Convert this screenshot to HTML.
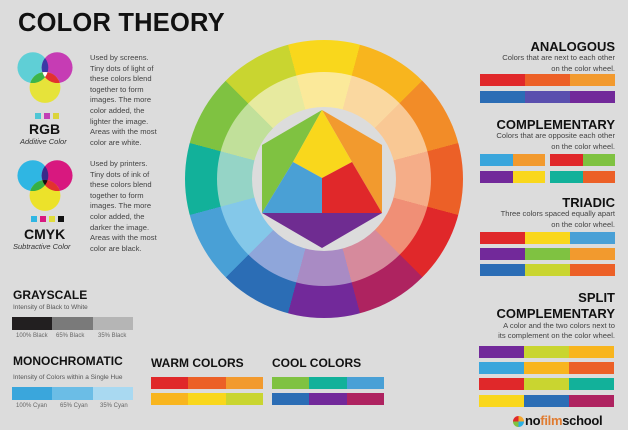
<!DOCTYPE html>
<html><head><meta charset="utf-8"><style>
*{margin:0;padding:0;box-sizing:border-box}
body{width:628px;height:430px;background:#dcdcdc;position:relative;overflow:hidden;font-family:"Liberation Sans",sans-serif;color:#111}
.a{position:absolute}
.t{font-weight:bold;color:#111;white-space:nowrap}
.p{font-size:7.6px;line-height:10.6px;color:#444;white-space:nowrap}
.bar{position:absolute;display:flex;height:12px}
.bar div{flex:1}
.r{text-align:right}
</style></head><body>
<div class="a t" style="left:18px;top:9px;font-size:25.5px;letter-spacing:0.2px">COLOR THEORY</div>

<!-- RGB venn -->
<svg class="a" style="left:15px;top:50px" width="60" height="54" viewBox="4 4 54 49">
<circle cx="20" cy="20" r="14" fill="#5fcfd6"/>
<circle cx="42" cy="20" r="14" fill="#c63cb4"/>
<circle cx="31" cy="38" r="14" fill="#e6e33a"/>
<path d="M31 11.34A14 14 0 0 1 31 28.66A14 14 0 0 1 31 11.34Z" fill="#3b3aa6"/>
<path d="M33.35 24.21A14 14 0 0 0 17.65 33.79A14 14 0 0 0 33.35 24.21Z" fill="#3cb54a"/>
<path d="M28.65 24.21A14 14 0 0 1 44.35 33.79A14 14 0 0 1 28.65 24.21Z" fill="#e2322e"/>
<path d="M28.65 24.21A14 14 0 0 1 33.35 24.21A14 14 0 0 1 31 28.66A14 14 0 0 1 28.65 24.21Z" fill="#fff"/>
</svg>
<div class="a" style="left:35px;top:113px;width:6px;height:6px;background:#4fc6d5"></div>
<div class="a" style="left:44px;top:113px;width:6px;height:6px;background:#c23fb5"></div>
<div class="a" style="left:53px;top:113px;width:6px;height:6px;background:#dbd43a"></div>
<div class="a t" style="left:29px;top:121px;font-size:14px">RGB</div>
<div class="a" style="left:20px;top:137px;font-size:7.5px;font-style:italic;color:#333">Additive Color</div>
<div class="a p" style="left:90px;top:53px">Used by screens.<br>Tiny dots of light of<br>these colors blend<br>together to form<br>images. The more<br>color added, the<br>lighter the image.<br>Areas with the most<br>color are white.</div>

<!-- CMYK venn -->
<svg class="a" style="left:15px;top:158px" width="60" height="54" viewBox="4 4 54 49">
<circle cx="20" cy="20" r="14" fill="#2fb6e3"/>
<circle cx="42" cy="20" r="14" fill="#d8187f"/>
<circle cx="31" cy="38" r="14" fill="#ece22a"/>
<path d="M31 11.34A14 14 0 0 1 31 28.66A14 14 0 0 1 31 11.34Z" fill="#3a2a8a"/>
<path d="M33.35 24.21A14 14 0 0 0 17.65 33.79A14 14 0 0 0 33.35 24.21Z" fill="#35b045"/>
<path d="M28.65 24.21A14 14 0 0 1 44.35 33.79A14 14 0 0 1 28.65 24.21Z" fill="#e2322e"/>
<path d="M28.65 24.21A14 14 0 0 1 33.35 24.21A14 14 0 0 1 31 28.66A14 14 0 0 1 28.65 24.21Z" fill="#111"/>
</svg>
<div class="a" style="left:31px;top:216px;width:6px;height:6px;background:#2fb6e3"></div>
<div class="a" style="left:40px;top:216px;width:6px;height:6px;background:#d8187f"></div>
<div class="a" style="left:49px;top:216px;width:6px;height:6px;background:#e0dc3a"></div>
<div class="a" style="left:58px;top:216px;width:6px;height:6px;background:#111"></div>
<div class="a t" style="left:24px;top:226px;font-size:14px">CMYK</div>
<div class="a" style="left:13px;top:242px;font-size:7.5px;font-style:italic;color:#333">Subtractive Color</div>
<div class="a p" style="left:90px;top:159px">Used by printers.<br>Tiny dots of ink of<br>these colors blend<br>together to form<br>images. The more<br>color added, the<br>darker the image.<br>Areas with the most<br>color are black.</div>

<!-- wheel -->
<div class="a" style="left:185px;top:40px;width:278px;height:278px;border-radius:50%;background:conic-gradient(from -15deg,#f9d71c 0 30deg,#f8b51e 30deg 60deg,#f28c28 60deg 90deg,#ec6027 90deg 120deg,#e0282a 120deg 150deg,#ae2360 150deg 180deg,#72299a 180deg 210deg,#2b6db5 210deg 240deg,#49a0d6 240deg 270deg,#12b19a 270deg 300deg,#7fc241 300deg 330deg,#c9d530 330deg 360deg)"></div>
<div class="a" style="left:217px;top:72px;width:214px;height:214px;border-radius:50%;background:conic-gradient(from -15deg,#fbe99a 0 30deg,#fad8a0 30deg 60deg,#f9c894 60deg 90deg,#f5ad88 90deg 120deg,#f08f76 120deg 150deg,#d68a9c 150deg 180deg,#a98bc4 180deg 210deg,#8fa6da 210deg 240deg,#84c8e9 240deg 270deg,#95d4c6 270deg 300deg,#c1e09a 300deg 330deg,#e7ea9f 330deg 360deg)"></div>
<div class="a" style="left:252px;top:107px;width:144px;height:144px;border-radius:50%;background:#dcdcdc"></div>
<svg class="a" style="left:0;top:0" width="628" height="430">
<polygon points="322,110 262,145 262,213 293,162" fill="#7fc241"/>
<polygon points="322,110 382,145 382,213 352,162" fill="#f29a2e"/>
<polygon points="322,110 293,162 322,178 352,162" fill="#f9d71c"/>
<polygon points="293,162 322,178 322,213 262,213" fill="#4aa0d5"/>
<polygon points="352,162 382,213 322,213 322,178" fill="#e0282a"/>
<polygon points="262,213 382,213 322,248" fill="#6f2c91"/>
</svg>

<!-- right -->
<div class="a t r" style="right:13px;top:39px;font-size:13px">ANALOGOUS</div>
<div class="a p r" style="right:13px;top:53px">Colors that are next to each other<br>on the color wheel.</div>
<div class="bar" style="left:480px;top:74px;width:135px"><div style="background:#e0282a"></div><div style="background:#ec6027"></div><div style="background:#f29a2e"></div></div>
<div class="bar" style="left:480px;top:91px;width:135px"><div style="background:#2b6db5"></div><div style="background:#5a4fae"></div><div style="background:#72299a"></div></div>

<div class="a t r" style="right:13px;top:117px;font-size:13px">COMPLEMENTARY</div>
<div class="a p r" style="right:13px;top:131px">Colors that are opposite each other<br>on the color wheel.</div>
<div class="bar" style="left:480px;top:154px;width:65px"><div style="background:#3aa6dc"></div><div style="background:#f29a2e"></div></div>
<div class="bar" style="left:550px;top:154px;width:65px"><div style="background:#e0282a"></div><div style="background:#7fc241"></div></div>
<div class="bar" style="left:480px;top:171px;width:65px"><div style="background:#72299a"></div><div style="background:#f9d71c"></div></div>
<div class="bar" style="left:550px;top:171px;width:65px"><div style="background:#12b19a"></div><div style="background:#ec6027"></div></div>

<div class="a t r" style="right:13px;top:195px;font-size:13px">TRIADIC</div>
<div class="a p r" style="right:13px;top:209px">Three colors spaced equally apart<br>on the color wheel.</div>
<div class="bar" style="left:480px;top:232px;width:135px"><div style="background:#e0282a"></div><div style="background:#f9d71c"></div><div style="background:#49a0d6"></div></div>
<div class="bar" style="left:480px;top:248px;width:135px"><div style="background:#72299a"></div><div style="background:#7fc241"></div><div style="background:#f29a2e"></div></div>
<div class="bar" style="left:480px;top:264px;width:135px"><div style="background:#2b6db5"></div><div style="background:#c9d530"></div><div style="background:#ec6027"></div></div>

<div class="a t r" style="right:13px;top:290px;font-size:13px;line-height:16px">SPLIT<br>COMPLEMENTARY</div>
<div class="a p r" style="right:13px;top:321px;line-height:10px">A color and the two colors next to<br>its complement on the color wheel.</div>
<div class="bar" style="left:479px;top:346px;width:135px"><div style="background:#72299a"></div><div style="background:#c9d530"></div><div style="background:#f8b51e"></div></div>
<div class="bar" style="left:479px;top:362px;width:135px"><div style="background:#3aa6dc"></div><div style="background:#f8b51e"></div><div style="background:#ec6027"></div></div>
<div class="bar" style="left:479px;top:378px;width:135px"><div style="background:#e0282a"></div><div style="background:#c9d530"></div><div style="background:#12b19a"></div></div>
<div class="bar" style="left:479px;top:395px;width:135px"><div style="background:#f9d71c"></div><div style="background:#2b6db5"></div><div style="background:#ae2360"></div></div>

<!-- logo -->
<svg class="a" style="left:513px;top:416px" width="11" height="11" viewBox="0 0 11 11"><path d="M5.5 5.5V0A5.5 5.5 0 0 1 11 5.5Z" fill="#f2a72e"/><path d="M5.5 5.5H11A5.5 5.5 0 0 1 5.5 11Z" fill="#2bb0e3"/><path d="M5.5 5.5V11A5.5 5.5 0 0 1 0 5.5Z" fill="#7fc241"/><path d="M5.5 5.5H0A5.5 5.5 0 0 1 5.5 0Z" fill="#e0282a"/></svg>
<div class="a t" style="left:525px;top:413px;font-size:13px;letter-spacing:-0.3px">no<span style="color:#e07b30">film</span>school</div>

<!-- grayscale -->
<div class="a t" style="left:13px;top:288px;font-size:12px">GRAYSCALE</div>
<div class="a" style="left:13px;top:304px;font-size:6.5px;color:#555">Intensity of Black to White</div>
<div class="bar" style="left:12px;top:317px;width:121px;height:13px"><div style="background:#221f20"></div><div style="background:#7a7a7a"></div><div style="background:#b5b5b5"></div></div>
<div class="a" style="left:16px;top:333px;font-size:6px;color:#666">100% Black</div>
<div class="a" style="left:56px;top:333px;font-size:6px;color:#666">65% Black</div>
<div class="a" style="left:98px;top:333px;font-size:6px;color:#666">35% Black</div>

<div class="a t" style="left:13px;top:354px;font-size:12px">MONOCHROMATIC</div>
<div class="a" style="left:13px;top:374px;font-size:6.5px;color:#555">Intensity of Colors within a Single Hue</div>
<div class="bar" style="left:12px;top:387px;width:121px;height:13px"><div style="background:#3aa6dc"></div><div style="background:#6bbde6"></div><div style="background:#a9d9f1"></div></div>
<div class="a" style="left:16px;top:403px;font-size:6px;color:#666">100% Cyan</div>
<div class="a" style="left:60px;top:403px;font-size:6px;color:#666">65% Cyan</div>
<div class="a" style="left:100px;top:403px;font-size:6px;color:#666">35% Cyan</div>

<div class="a t" style="left:151px;top:356px;font-size:12px">WARM COLORS</div>
<div class="bar" style="left:151px;top:377px;width:112px"><div style="background:#e0282a"></div><div style="background:#ec6027"></div><div style="background:#f29a2e"></div></div>
<div class="bar" style="left:151px;top:393px;width:112px"><div style="background:#f8b51e"></div><div style="background:#f9d71c"></div><div style="background:#c9d530"></div></div>
<div class="a t" style="left:272px;top:356px;font-size:12px">COOL COLORS</div>
<div class="bar" style="left:272px;top:377px;width:112px"><div style="background:#7fc241"></div><div style="background:#12b19a"></div><div style="background:#49a0d6"></div></div>
<div class="bar" style="left:272px;top:393px;width:112px"><div style="background:#2b6db5"></div><div style="background:#72299a"></div><div style="background:#ae2360"></div></div>
</body></html>
